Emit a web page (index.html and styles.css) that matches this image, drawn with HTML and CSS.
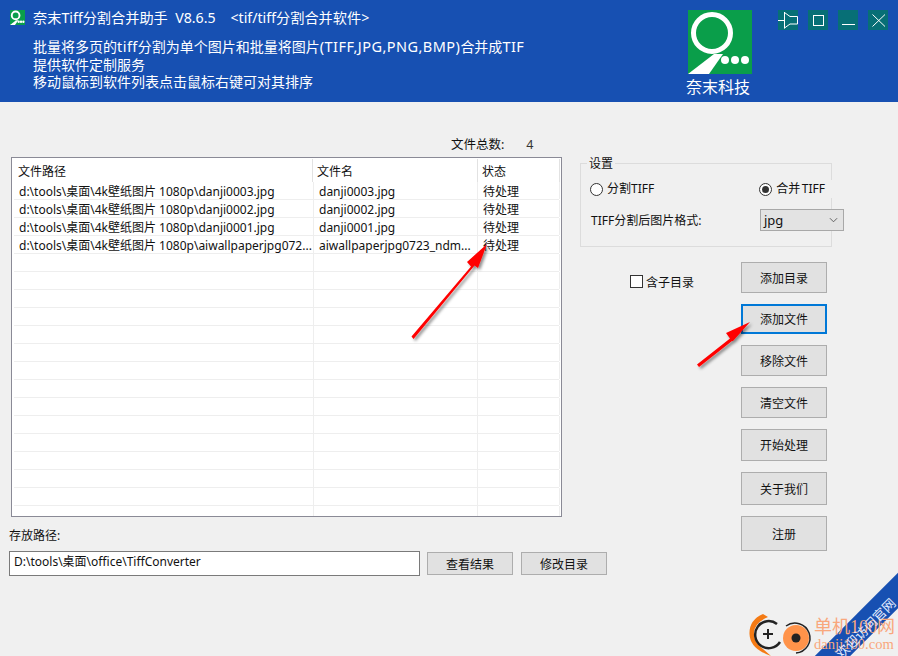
FILE: index.html
```html
<!DOCTYPE html>
<html lang="zh">
<head>
<meta charset="utf-8">
<title>奈末Tiff分割合并助手</title>
<link rel="stylesheet" href="styles.css">
</head>
<body>
<div class="app">
  <header class="banner">
    <div class="banner-text">
      <div class="title-row">
        <svg class="app-icon" viewBox="0 0 64 64"><rect width="64" height="64" fill="#0a9e4a"/><circle cx="24" cy="23" r="16.500" fill="none" stroke="#fff" stroke-width="8"/><path d="M0 64 L26 44 L36 44 L21 64Z" fill="#fff"/><circle cx="37" cy="50" r="5" fill="#fff"/><circle cx="47" cy="50" r="5" fill="#fff"/><circle cx="57" cy="50" r="5" fill="#fff"/></svg>
        <span class="app-title">奈末Tiff分割合并助手&nbsp; V8.6.5 &nbsp; &nbsp;&lt;tif/tiff分割合并软件&gt;</span>
      </div>
      <div class="banner-lines">
        <p>批量将多页的<span class="lat">tiff</span>分割为单个图片和批量将图片<span class="lat">(TIFF,JPG,PNG,BMP)</span>合并成<span class="lat">TIF</span></p>
        <p>提供软件定制服务</p>
        <p>移动鼠标到软件列表点击鼠标右键可对其排序</p>
      </div>
    </div>
    <div class="brand">
      <svg class="brand-logo" viewBox="0 0 64 64"><rect width="64" height="64" fill="#0a9e4a"/><circle cx="24" cy="23" r="18.500" fill="none" stroke="#fff" stroke-width="5"/><path d="M0 64 L26 44 L35 44 L21 64Z" fill="#fff"/><circle cx="37" cy="50" r="4" fill="#fff"/><circle cx="47" cy="50" r="4" fill="#fff"/><circle cx="57" cy="50" r="4" fill="#fff"/></svg>
      <span class="brand-name">奈末科技</span>
    </div>
    <div class="win-buttons">
      <button class="win-btn"><svg viewBox="0 0 20 20"><path d="M0 10.500H6M6.500 2V18.500M6.500 2.500 L12 6.500H19.500V14H12L6.500 18" fill="none" stroke="#fff" stroke-width="1"/></svg></button>
      <button class="win-btn"><svg viewBox="0 0 20 20"><rect x="5.500" y="5.500" width="10" height="10" fill="none" stroke="#fff" stroke-width="1"/></svg></button>
      <button class="win-btn"><svg viewBox="0 0 20 20"><path d="M4 14.500H17" stroke="#fff" stroke-width="1"/></svg></button>
      <button class="win-btn"><svg viewBox="0 0 20 20"><path d="M4.500 4.500L17 16.500M17 4.500L4.500 16.500" stroke="#fff" stroke-width="1"/></svg></button>
    </div>
  </header>

  <main class="content">
    <section class="left">
      <div class="count-row"><span>文件总数:</span><span class="count">4</span></div>
      <div class="list">
        <div class="row head"><span>文件路径</span><span>文件名</span><span>状态</span></div>
        <div class="row"><span>d:\tools\桌面\4k壁纸图片 1080p\danji0003.jpg</span><span>danji0003.jpg</span><span>待处理</span></div>
        <div class="row"><span>d:\tools\桌面\4k壁纸图片 1080p\danji0002.jpg</span><span>danji0002.jpg</span><span>待处理</span></div>
        <div class="row"><span>d:\tools\桌面\4k壁纸图片 1080p\danji0001.jpg</span><span>danji0001.jpg</span><span>待处理</span></div>
        <div class="row"><span>d:\tools\桌面\4k壁纸图片 1080p\aiwallpaperjpg072...</span><span>aiwallpaperjpg0723_ndm...</span><span>待处理</span></div>
        <div class="row"><span></span><span></span><span></span></div>
        <div class="row"><span></span><span></span><span></span></div>
        <div class="row"><span></span><span></span><span></span></div>
        <div class="row"><span></span><span></span><span></span></div>
        <div class="row"><span></span><span></span><span></span></div>
        <div class="row"><span></span><span></span><span></span></div>
        <div class="row"><span></span><span></span><span></span></div>
        <div class="row"><span></span><span></span><span></span></div>
        <div class="row"><span></span><span></span><span></span></div>
        <div class="row"><span></span><span></span><span></span></div>
        <div class="row"><span></span><span></span><span></span></div>
        <div class="row"><span></span><span></span><span></span></div>
        <div class="row"><span></span><span></span><span></span></div>
        <div class="row"><span></span><span></span><span></span></div>
        <div class="row"><span></span><span></span><span></span></div>
      </div>
      <div class="path-label">存放路径:</div>
      <div class="path-row">
        <div class="path-input">D:\tools\桌面\office\TiffConverter</div>
        <button class="btn small">查看结果</button>
        <button class="btn small">修改目录</button>
      </div>
    </section>

    <section class="right">
      <fieldset class="settings">
        <legend>设置</legend>
        <div class="radios">
          <label class="radio"><i class="dot"></i>分割TIFF</label>
          <label class="radio"><i class="dot on"></i>合并 TIFF</label>
        </div>
        <div class="format-row">
          <span class="format-label">TIFF分割后图片格式:</span>
          <div class="select"><span>jpg</span><svg viewBox="0 0 10 6"><path d="M1 1L5 5L9 1" fill="none" stroke="#555" stroke-width="1"/></svg></div>
        </div>
      </fieldset>
      <div class="actions">
        <label class="check"><i class="box"></i><span class="check-text">含子目录</span></label>
        <div class="buttons">
          <button class="btn">添加目录</button>
          <button class="btn focus">添加文件</button>
          <button class="btn">移除文件</button>
          <button class="btn">清空文件</button>
          <button class="btn h32">开始处理</button>
          <button class="btn h33">关于我们</button>
          <button class="btn h35">注册</button>
        </div>
      </div>
    </section>
  </main>

  <svg class="arrows" viewBox="0 0 898 656">
    <defs><filter id="sh" x="-20%" y="-20%" width="140%" height="140%"><feDropShadow dx="2" dy="2" stdDeviation="1.500" flood-color="#000" flood-opacity=".45"/></filter></defs>
    <g filter="url(#sh)" fill="#f00">
      <path d="M411.500 336.500 L471 266.500 L467 262 L487 244 L478 268 L474.500 265.500 L413.500 339Z"/>
      <path d="M697 364.500 L730 338.500 L726 333 L750 322 L733 341 L732 341 L699 367Z"/>
    </g>
  </svg>

  <div class="watermark">
    <div class="ribbon"></div>
    <svg class="wm-logo" viewBox="0 0 66 44">
      <path d="M14 2 Q0 8 0.500 22 Q1 37 22 44 L14 37 Q5 31 5 21 Q5 11 19 5Z" fill="#f47a14"/>
      <path d="M28 12 A13.500 13.500 0 1 0 31 30" fill="none" stroke="#222" stroke-width="2.500"/>
      <path d="M14 22H24M19 17V27" stroke="#222" stroke-width="2"/>
      <circle cx="47" cy="26" r="13" fill="#ff934a"/>
      <path d="M37 14 A15 15 0 1 1 47 41" fill="none" stroke="#222" stroke-width="1.500"/>
      <circle cx="47" cy="26" r="4.500" fill="#222"/>
    </svg>
    <div class="wm-text"><div class="wm-cn">单机100网</div><div class="wm-en">danji100.com</div></div>
    <div class="ribbon-text">欢迎访问官网</div>
  </div>
</div>
</body>
</html>
```

FILE: styles.css
```css
* { box-sizing: border-box; }
html, body { margin: 0; height: 100%; overflow: hidden; }
body { background: #f0f0f0; color: #111; font: 12px/18px "Noto Sans", "Noto Sans CJK SC", sans-serif; }
p { margin: 0; }
.app { position: relative; width: 898px; height: 656px; overflow: hidden; }

.banner { height: 102px; background: #1750b2; color: #fff; display: flex; padding: 10px 10px 0; }
.banner-text { width: 671px; }
.title-row { display: flex; align-items: center; gap: 8px; height: 15px; }
.app-icon { width: 15px; height: 15px; flex: none; }
.app-title { font-size: 14.200px; white-space: nowrap; }
.banner-lines { margin: 13px 0 0 23px; font-size: 14px; line-height: 17.500px; white-space: nowrap; }
.lat { font-size: 14.500px; letter-spacing: .45px; }
.brand { width: 100px; margin-left: -10px; display: flex; flex-direction: column; align-items: center; }
.brand-logo { width: 64px; height: 64px; display: block; }
.brand-name { font-size: 16px; line-height: 24px; color: #fff; margin: 1px 0 0 -4px; width: 68px; text-align: center; white-space: nowrap; }
.win-buttons { display: flex; gap: 10px; margin-left: 8px; }
.win-btn { width: 20px; height: 20px; padding: 0; border: 0; background: #076f76; }
.win-btn svg { display: block; width: 20px; height: 20px; }

.content { display: flex; padding: 33px 0 0 11px; }
.left { width: 569px; }
.count-row { display: flex; height: 22px; padding-left: 440px; gap: 22px; font-size: 12.500px; line-height: 20px; }
.count { color: #333; }
.list { width: 551px; height: 360px; background: #fff; border: 1px solid #8a8a96; padding: 1px 2px 0 2px; overflow: hidden; }
.row { display: grid; grid-template-columns: 300px 164px 82px; height: 18px; border-bottom: 1px solid #eeeeee; line-height: 19px; font-size: 12px; }
.row span { padding-left: 5px; white-space: nowrap; overflow: hidden; border-right: 1px solid #eee; }
.row.head { grid-template-columns: 299px 165px 82px; height: 23px; border-bottom: 0; line-height: 25px; }
.row.head span { padding-left: 4px; border-right: 1px solid #e2e2e2; }
.path-label { margin: 9px 0 0 -2px; line-height: 20px; }
.path-row { display: flex; margin: 5px 0 0 -2px; align-items: flex-start; gap: 7px; }
.path-input { flex: none; width: 411px; height: 25px; background: #fff; border: 1px solid #7a7a7a; padding-left: 4px; line-height: 20px; }
.btn { display: block; flex: none; width: 86px; height: 31px; padding: 2px 0 0; background: #e1e1e1; border: 1px solid #adadad; color: #111; font: inherit; }
.btn.small { height: 23px; margin: 1px 0 0; line-height: 16px; }
.btn.small + .btn.small { margin-left: 1px; }
.btn.focus { height: 30px; border: 2px solid #0078d7; }
.btn.h32 { height: 32px; }
.btn.h33 { height: 33px; }
.btn.h35 { height: 35px; }

.right { width: 318px; }
.settings { width: 252px; min-width: 0; height: 92px; margin: 20px 0 0; padding: 0 0 0 9px; border: 1px solid #dcdcdc; }
.settings legend { padding: 2px 2px 0; margin-left: -3px; line-height: 14px; }
.radios { display: flex; justify-content: space-between; width: 235px; line-height: 18px; margin-top: 9px; }
.radio { display: flex; align-items: center; gap: 4px; white-space: nowrap; }
.radio + .radio { background: #f0f0f0; padding-right: 8px; margin-right: -8px; word-spacing: -1.500px; }
.dot { width: 13px; height: 13px; border: 1px solid #333; border-radius: 50%; background: #fff; display: block; position: relative; }
.dot.on::after { content: ""; position: absolute; left: 2px; top: 2px; width: 7px; height: 7px; border-radius: 50%; background: #333; }
.format-row { display: flex; align-items: center; justify-content: space-between; width: 254px; margin-top: 11px; }
.format-label { padding: 2px 0 0 1px; }
.select { width: 84px; height: 22px; background: #e3e3e3; border: 1px solid #a8a8a8; display: flex; align-items: center; justify-content: space-between; padding: 0 5px 0 3px; font-size: 13px; }
.select svg { width: 9px; height: 6px; }
.actions { display: flex; margin-top: 15px; }
.check { display: flex; align-items: center; gap: 3px; height: 20px; margin: 9px 0 0 50px; width: 111px; }
.check-text { padding-top: 3px; }
.box { width: 13px; height: 13px; display: block; background: #fff; border: 1px solid #333; }
.buttons { display: flex; flex-direction: column; gap: 11px; }

.arrows { position: absolute; inset: 0; width: 898px; height: 656px; pointer-events: none; }

.watermark { position: absolute; right: 0; bottom: 0; width: 178px; height: 96px; pointer-events: none; overflow: hidden; }
.ribbon { position: absolute; left: 41px; top: 60px; width: 190px; height: 25px; background: #1750b2; transform: rotate(-45deg); }
.ribbon-text { position: absolute; left: 105px; top: 56px; width: 82px; height: 25px; transform: rotate(-45deg); color: #e4edff; font-size: 13px; line-height: 25px; text-align: center; white-space: nowrap; }
.wm-logo { position: absolute; left: 29px; top: 52px; width: 66px; height: 44px; }
.wm-text { position: absolute; left: 94px; top: 57px; color: #f9a77c; font-family: "Liberation Serif", "Noto Sans CJK SC", serif; white-space: nowrap; }
.wm-cn { font-size: 18px; line-height: 20px; }
.wm-en { font-size: 14.600px; line-height: 15px; }
```
